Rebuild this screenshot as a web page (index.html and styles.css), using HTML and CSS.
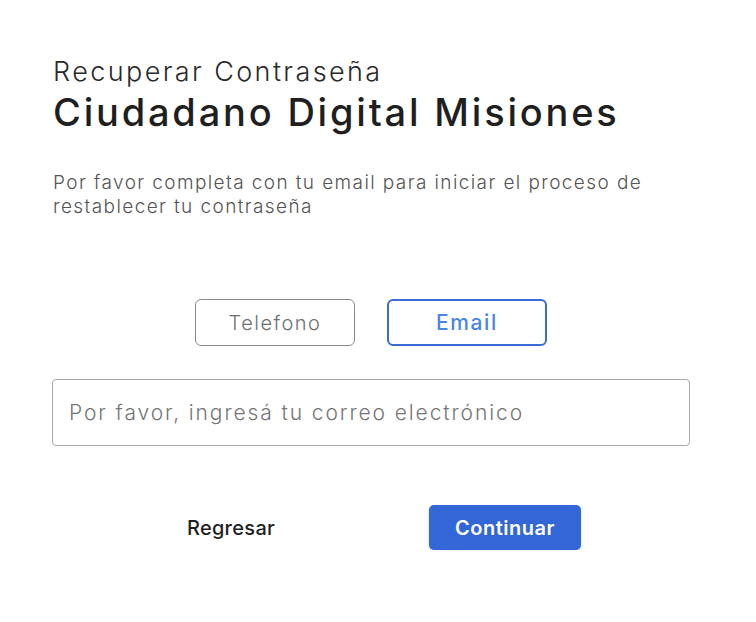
FILE: index.html
```html
<!DOCTYPE html>
<html lang="es">
<head>
<meta charset="utf-8">
<title>Recuperar Contraseña</title>
<link rel="stylesheet" href="styles.css">
</head>
<body>
<main class="page">
  <header class="head">
    <p class="kicker">Recuperar Contraseña</p>
    <h1 class="title">Ciudadano Digital Misiones</h1>
  </header>
  <p class="lead">Por favor completa con tu email para iniciar el proceso de restablecer tu contraseña</p>
  <div class="toggle">
    <button class="opt">Telefono</button>
    <button class="opt opt-active">Email</button>
  </div>
  <input class="field" type="email" placeholder="Por favor, ingresá tu correo electrónico">
  <div class="actions">
    <button class="btn-link">Regresar</button>
    <button class="btn-primary">Continuar</button>
  </div>
</main>
</body>
</html>
```
FILE: styles.css
```css
* { box-sizing: border-box; }
html, body { margin: 0; background: #ffffff; }
body { font-family: Inter, "Noto Sans", sans-serif; color: #222; }
.page {
  width: 638px;
  margin-left: 52px;
  padding-top: 55px;
  display: flex;
  flex-direction: column;
}
.head { display: flex; flex-direction: column; padding-left: 1px; }
.kicker {
  margin: 0;
  font-size: 27px;
  font-weight: 300;
  line-height: 34px;
  letter-spacing: 2.4px;
  color: #2a2a2a;
}
.title {
  margin: 0;
  font-size: 38px;
  font-weight: 500;
  line-height: 46px;
  color: #1f1f1f;
  letter-spacing: 2.8px;
}
.lead {
  margin: 36px 0 0 1px;
  font-size: 19px;
  font-weight: 300;
  line-height: 24px;
  letter-spacing: 1.4px;
  color: #555;
  max-width: 620px;
}
.toggle {
  margin-top: 80px;
  display: flex;
  justify-content: center;
  gap: 32px;
}
.opt {
  width: 160px;
  height: 47px;
  background: #fff;
  border: 1.5px solid #8a8a8a;
  border-radius: 6px;
  font-family: inherit;
  font-size: 20px;
  font-weight: 300;
  letter-spacing: 1.5px;
  color: #6f6f6f;
}
.opt-active {
  border: 2px solid #3a6bd6;
  color: #4a86e8;
  font-weight: 500;
  font-size: 21px;
  letter-spacing: 1.6px;
}
.field {
  margin-top: 33px;
  width: 638px;
  height: 67px;
  border: 1.5px solid #a8a8a8;
  border-radius: 4px;
  padding: 0 16px;
  font-family: inherit;
  font-size: 21px;
  font-weight: 300;
  letter-spacing: 1.9px;
  color: #333;
  background: #fff;
}
.field::placeholder { color: #757575; }
.actions {
  margin-top: 59px;
  display: flex;
  justify-content: center;
  gap: 122px;
  padding-right: 6px;
}
.btn-link, .btn-primary {
  width: 152px;
  height: 45px;
  border-radius: 5px;
  font-family: inherit;
  font-size: 20px;
  font-weight: 500;
}
.btn-link { background: transparent; border: none; color: #1f1f1f; letter-spacing: 0.3px; }
.btn-primary {
  background: #3366d6;
  border: none;
  color: #fff;
  font-weight: 600;
  letter-spacing: 0.5px;
  box-shadow: 0 1px 3px rgba(51, 102, 214, 0.25);
}
```
